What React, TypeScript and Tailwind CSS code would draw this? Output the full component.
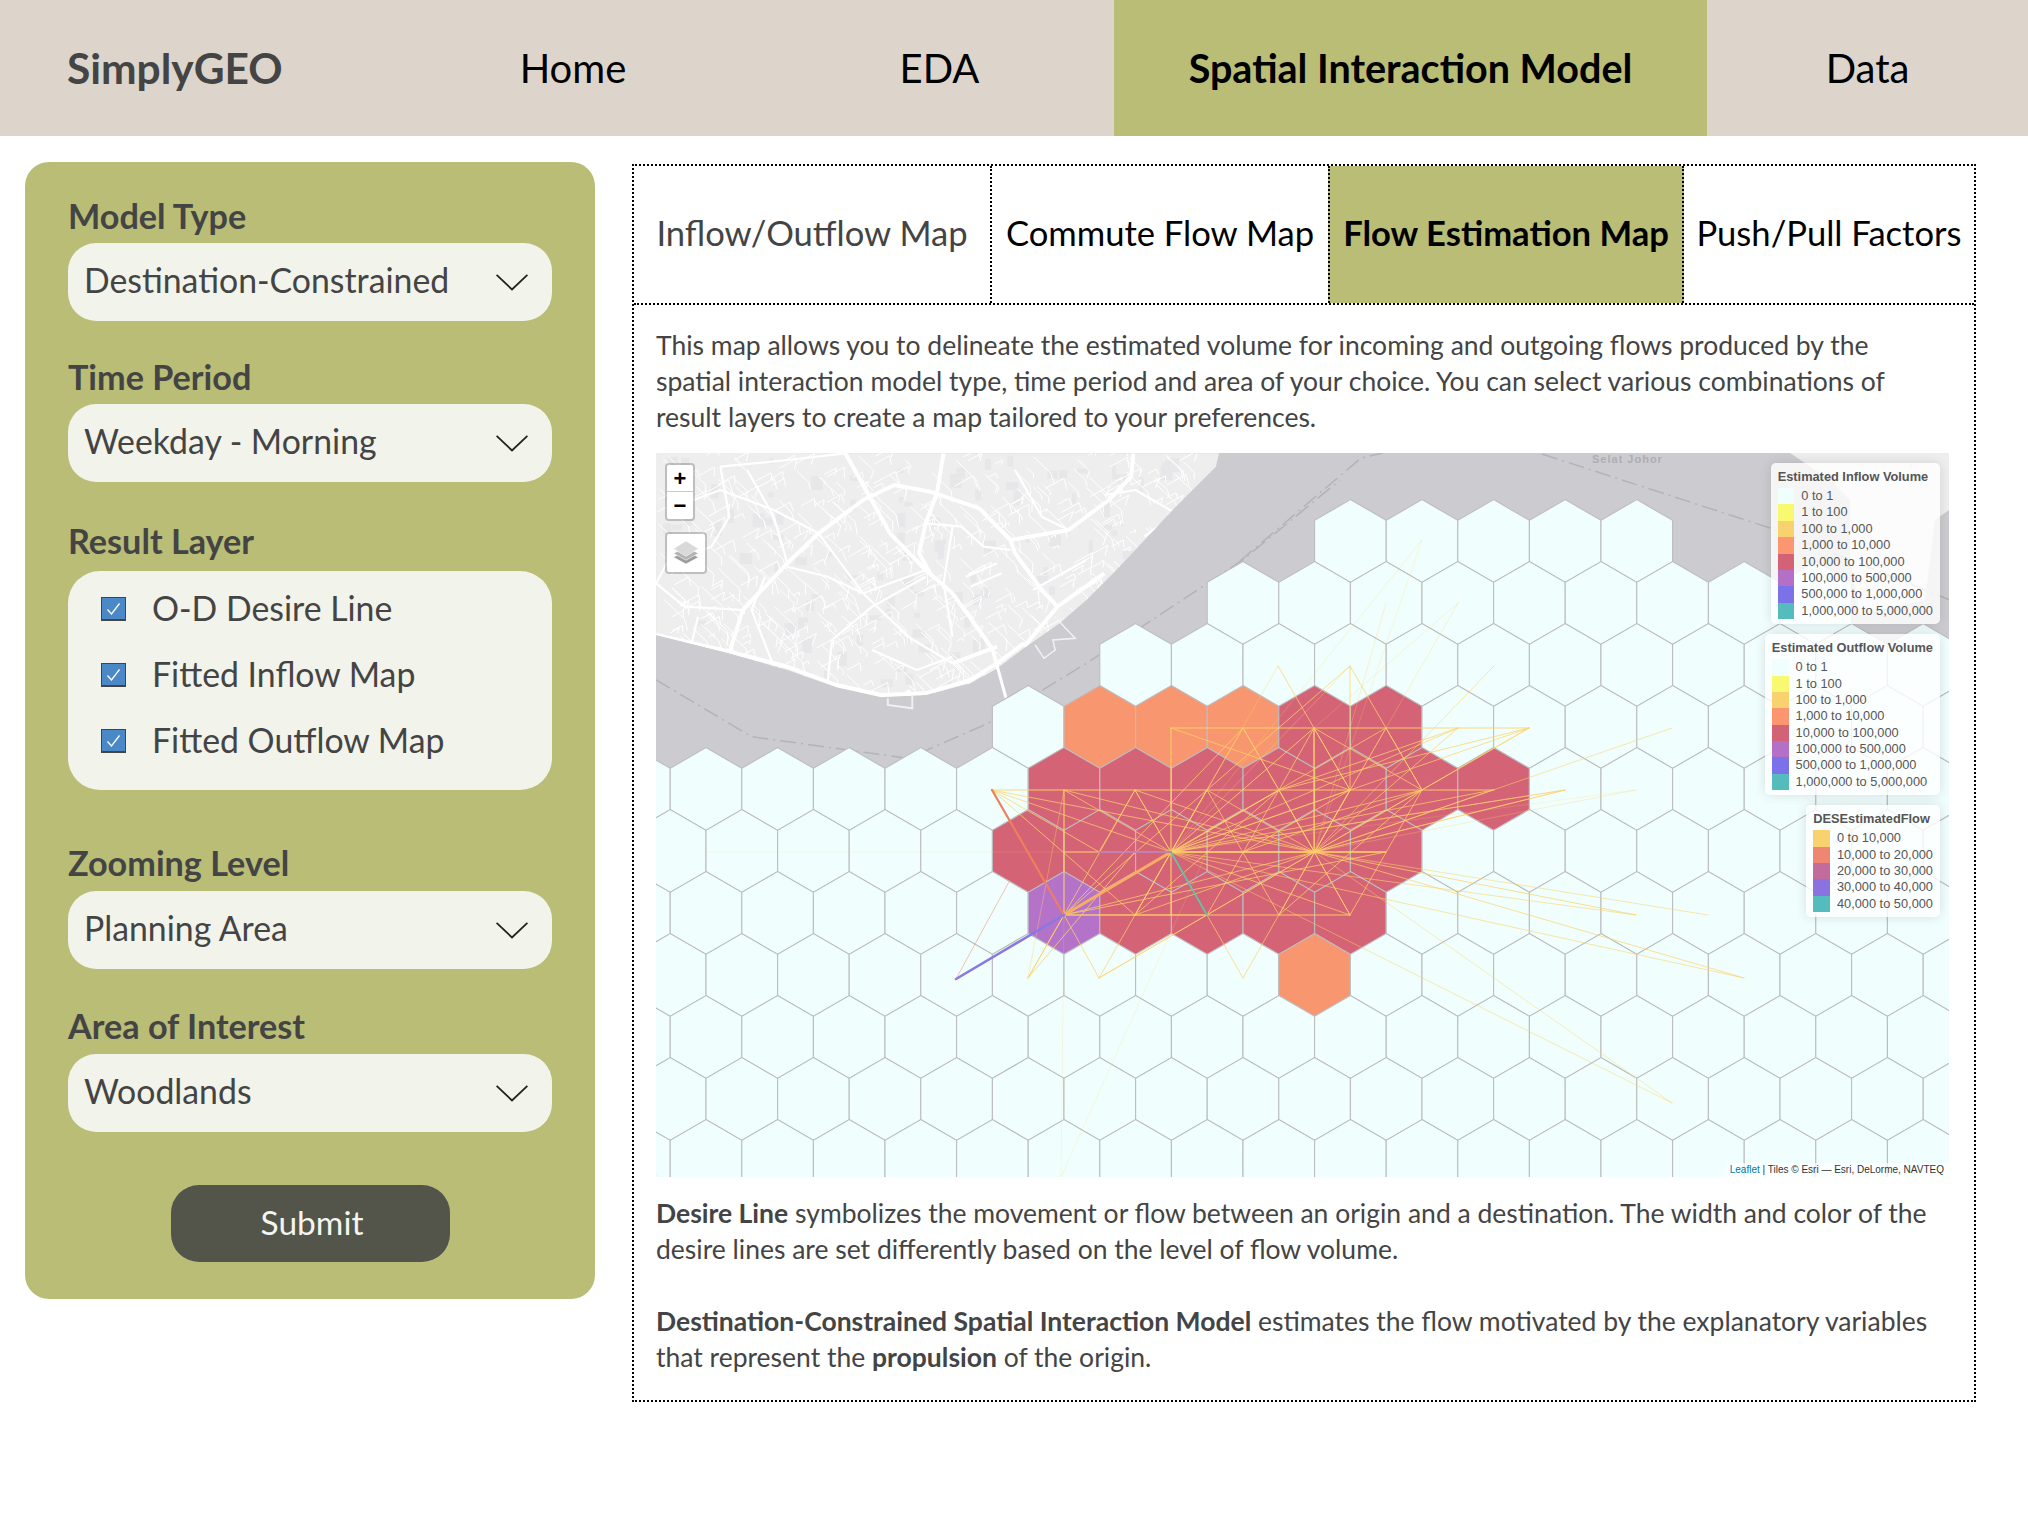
import React from "react";

type Pt = [number, number];

const olive = "bg-[#b9bd76]";

// map drawing uses page pixels, so the svg viewBox starts at the map's corner
const MAP = { x: 656, y: 453, w: 1293, h: 724 };

// the crop I read coastline and roads from was squashed horizontally
const z = (x: number, y: number): Pt => [640 + x / 2.24, 450 + y / 3];
const line = (pts: Pt[]) => pts.map((p) => `${p[0].toFixed(1)},${p[1].toFixed(1)}`).join(" ");
const zl = (vals: number[]) => {
    const out: Pt[] = [];
    for (let i = 0; i < vals.length; i += 2) out.push(z(vals[i], vals[i + 1]));
    return line(out);
};

const landPoints =
    "656,453 " +
    zl([36, 555, 200, 610, 330, 660, 440, 712, 540, 742, 640, 735, 740, 700, 800, 655, 860, 595, 940, 520, 1000, 450, 1060, 370, 1130, 270, 1200, 170, 1290, 50, 1297, 10]);

const majorRoads = [
    [36, 555, 200, 605, 330, 650, 440, 705, 540, 735, 640, 730, 740, 690, 800, 640, 860, 580],
    [460, 10, 510, 130, 560, 250, 640, 360, 700, 430, 770, 560, 790, 600, 820, 745],
    [680, 10, 665, 130, 640, 220, 625, 310, 650, 370],
    [200, 610, 230, 480, 330, 340, 400, 250, 500, 150, 570, 105, 650, 125, 760, 175, 830, 270, 840, 310, 900, 420, 935, 470],
    [1105, 10, 1100, 80, 1050, 150, 960, 240, 830, 270],
    [860, 590, 935, 470, 1040, 370],
    [700, 640, 800, 590],
    [600, 720, 610, 775],
];

const minorRoads = [
    [400, 250, 500, 430, 600, 560, 700, 640],
    [330, 350, 420, 380, 500, 430, 640, 360],
    [36, 400, 100, 470, 230, 480],
    [180, 50, 330, 30, 460, 10],
    [180, 50, 200, 200, 160, 290, 60, 340, 36, 400],
    [420, 700, 430, 570, 520, 470, 640, 380],
    [1040, 135, 1110, 120, 1200, 190, 1130, 260],
    [640, 220, 720, 230, 770, 290, 830, 300],
    [730, 380, 800, 340],
    [740, 410, 810, 370],
    [130, 500, 105, 640],
    [300, 650, 250, 480, 280, 380],
    [60, 180, 180, 120, 300, 180, 400, 250],
    [240, 60, 300, 200, 330, 340],
    [840, 60, 900, 200, 960, 240],
    [700, 230, 680, 400, 700, 560],
    [520, 600, 620, 660, 700, 620],
    [880, 420, 1000, 330],
];

// small streets: cheap repeatable noise, clipped to the land shape
function makeStreets() {
    const out: string[] = [];
    let seed = 17;
    const rnd = () => {
        seed = (seed * 16807) % 2147483647;
        return seed / 2147483647;
    };
    for (let i = 0; i < 620; i++) {
        const x = 40 + rnd() * 1180;
        const y = 15 + rnd() * 720;
        const a = rnd() < 0.5 ? 0.95 : -0.55;
        const len = 10 + rnd() * 34;
        const p1 = z(x, y);
        const p2: Pt = [p1[0] + len * 0.5, p1[1] + len * 0.5 * a];
        const p3: Pt = [p2[0] + len * 0.25 * (rnd() - 0.5), p2[1] + len * 0.3];
        out.push(line([p1, p2, p3]));
    }
    return out;
}
const streets = makeStreets();

function makeBlocks() {
    const out: Pt[] = [];
    let seed = 91;
    const rnd = () => {
        seed = (seed * 16807) % 2147483647;
        return seed / 2147483647;
    };
    for (let i = 0; i < 130; i++) out.push(z(40 + rnd() * 1150, 15 + rnd() * 710));
    return out;
}
const blocks = makeBlocks();

const HEX_R = 41.4;
const HEX_W = 71.6;

const center = (r: number, k: number): Pt => [(r % 2 === 0 ? 1350.4 : 1314.6) + HEX_W * k, 541 + 62 * r];

const hexPoints = ([cx, cy]: Pt) =>
    line([
        [cx, cy - HEX_R],
        [cx + HEX_W / 2, cy - 20.7],
        [cx + HEX_W / 2, cy + 20.7],
        [cx, cy + HEX_R],
        [cx - HEX_W / 2, cy + 20.7],
        [cx - HEX_W / 2, cy - 20.7],
    ]);

const PALE = "#f0fffd";
const RED = "#d46376";
const ORANGE = "#f8976f";
const PURPLE = "#b473c9";

// row -> first and last column
const rows: [number, number, number][] = [
    [0, 0, 4],
    [1, -1, 7],
    [2, -3, 8],
    [3, -4, 9],
    [4, -10, 8],
    [5, -9, 9],
    [6, -10, 8],
    [7, -9, 9],
    [8, -10, 8],
    [9, -9, 9],
    [10, -10, 8],
];

function hexColor(r: number, k: number) {
    if (r === 3 && k >= -3 && k <= -1) return ORANGE;
    if (r === 3 && k >= 0 && k <= 1) return RED;
    if (r === 4 && k >= -4 && k <= 2) return RED;
    if (r === 5 && k >= -4 && k <= 1) return RED;
    if (r === 6 && k === -4) return PURPLE;
    if (r === 6 && k >= -3 && k <= 0) return RED;
    if (r === 7 && k === 0) return ORANGE;
    return PALE;
}

const hexes: { pts: string; fill: string }[] = [];
rows.forEach(([r, a, b]) => {
    for (let k = a; k <= b; k++) hexes.push({ pts: hexPoints(center(r, k)), fill: hexColor(r, k) });
});

const H1: Pt = [1171, 852];
const H2: Pt = [1314.5, 852];

const nodes: Pt[] = [
    [992, 790], [1064, 790], [1135, 790], [1207, 790], [1279, 790], [1350, 790], [1422, 790], [1493, 790], [1565, 790],
    [1243, 728], [1314, 728], [1386, 728], [1458, 728], [1529, 728],
    [1099, 852], [1243, 852], [1386, 852],
    [1064, 915], [1135, 915], [1207, 915], [1350, 915],
    [1099, 978], [1243, 978],
];

const secondary: [Pt, Pt[]][] = [
    [[1279, 790], [[1243, 728], [1314, 728], [1207, 915], [1350, 915], [1135, 915], [1458, 728], [1529, 728], [1064, 915]]],
    [[1422, 790], [[1314, 728], [1386, 728], [1529, 728], [1279, 915], [1350, 915], [1350, 666], [1243, 852]]],
    [[1064, 915], [[1135, 790], [1207, 790], [1243, 728], [1207, 915], [1028, 978], [1099, 978], [1386, 852]]],
    [[1350, 790], [[1314, 728], [1350, 666], [1278, 666], [1243, 852], [1279, 915], [1171, 728]]],
    [[1207, 790], [[1135, 915], [1279, 915], [1350, 666]]],
    [[1135, 790], [[1099, 852], [1207, 915]]],
    [[992, 790], [[1135, 915], [1064, 915], [1099, 852]]],
];

const straight: [Pt, Pt][] = [
    [[1171, 728], [1529, 728]],
    [[992, 790], [1494, 790]],
    [[1064, 852], [1386, 852]],
    [[1064, 915], [1350, 915]],
    [[1171, 728], [1171, 915]],
    [[1064, 790], [1064, 915]],
    [[1314, 728], [1314, 852]],
];

const faint: [Pt, Pt, number][] = [
    [H2, [1636, 915], 0.75],
    [H1, [1636, 915], 0.6],
    [H2, [1708, 915], 0.55],
    [H2, [1744, 978], 0.7],
    [H1, [1744, 978], 0.6],
    [H1, [1672, 1103], 0.5],
    [H2, [1672, 1103], 0.45],
    [H2, [1494, 666], 0.55],
    [H2, [1565, 790], 0.55],
    [H2, [1636, 790], 0.3],
    [H2, [1672, 728], 0.55],
    [H2, [1458, 603], 0.3],
    [H2, [1386, 603], 0.3],
    [H2, [1422, 540], 0.22],
    [H1, [1458, 603], 0.25],
    [H1, [1422, 540], 0.25],
    [H1, [1565, 790], 0.4],
    [H1, [1636, 790], 0.2],
    [H1, [1278, 666], 0.35],
    [H1, [1350, 666], 0.35],
    [H1, [706, 852], 0.18],
    [[1064, 915], [1061, 1177], 0.2],
    [[1207, 852], [1061, 1177], 0.2],
    [[1064, 915], [1028, 978], 0.9],
    [[1135, 852], [1028, 978], 0.8],
    [[1207, 915], [1099, 978], 0.7],
    [[1064, 790], [1028, 978], 0.4],
];

function FlowLines() {
    const stroke = "#fdd269";
    return (
        <g fill="none" strokeLinecap="round">
            {faint.map(([a, b, o], i) => (
                <line key={i} x1={a[0]} y1={a[1]} x2={b[0]} y2={b[1]} stroke={stroke} strokeOpacity={o} strokeWidth={1} />
            ))}
            {[H1, H2].map((hub, h) =>
                nodes.map((n, i) => (
                    <line key={`${h}-${i}`} x1={hub[0]} y1={hub[1]} x2={n[0]} y2={n[1]} stroke={stroke} strokeOpacity={0.7} strokeWidth={1} />
                ))
            )}
            {secondary.map(([hub, ends], h) =>
                ends.map((n, i) => (
                    <line key={`s${h}-${i}`} x1={hub[0]} y1={hub[1]} x2={n[0]} y2={n[1]} stroke={stroke} strokeOpacity={0.75} strokeWidth={1} />
                ))
            )}
            {straight.map(([a, b], i) => (
                <line key={`h${i}`} x1={a[0]} y1={a[1]} x2={b[0]} y2={b[1]} stroke={stroke} strokeWidth={1.2} strokeOpacity={0.9} />
            ))}
            <line x1={1064} y1={915} x2={1171} y2={852} stroke="#f8ad62" strokeWidth={3} />
            <line x1={992} y1={790} x2={1064} y2={915} stroke="#ee7f5c" strokeWidth={2.2} />
            <line x1={1064} y1={915} x2={956} y2={979} stroke="#8a78e2" strokeWidth={2.6} />
            <line x1={1099} y1={852} x2={1171} y2={852} stroke="#b06fc9" strokeWidth={1.6} />
            <line x1={1171} y1={852} x2={1207} y2={915} stroke="#5cc2ac" strokeWidth={1.6} />
            <line x1={956} y1={979} x2={1010} y2={880} stroke="#f0907a" strokeWidth={0.8} strokeOpacity={0.7} />
        </g>
    );
}

function BaseMap() {
    const borders = [
        zl([36, 690, 250, 860, 600, 925, 780, 820, 1000, 640, 1350, 330, 1568, 90]),
        line([[1240, 561], [1361, 458], [1383, 453]]),
        line([[1542, 454], [1770, 528], [1950, 600]]),
    ];
    return (
        <>
            <clipPath id="land">
                <polygon points={landPoints} />
            </clipPath>
            <rect x={MAP.x} y={MAP.y} width={MAP.w} height={MAP.h} fill="#cccbcf" />
            <polygon points={landPoints} fill="#eeeeef" />
            <polygon points="1790,453 1949,453 1949,510 1935,520 1925,600 1860,615 1850,560 1850,500 1830,480" fill="#eeeeef" />
            {borders.map((b, i) => (
                <polyline key={i} points={b} fill="none" stroke="#b4b4b7" strokeWidth={1.5} strokeDasharray="16 5 2 5" />
            ))}
            <g clipPath="url(#land)" fill="none" stroke="#ffffff" strokeLinejoin="round">
                {blocks.map((b, i) => (
                    <rect key={i} x={b[0]} y={b[1]} width={4 + (i % 5) * 2} height={5 + (i % 4) * 3} fill="#e7e7e9" stroke="none" />
                ))}
                {streets.map((s, i) => (
                    <polyline key={i} points={s} strokeWidth={1} />
                ))}
                {minorRoads.map((r, i) => (
                    <polyline key={i} points={zl(r)} strokeWidth={2.2} />
                ))}
                {majorRoads.map((r, i) => (
                    <polyline key={i} points={zl(r)} strokeWidth={4} />
                ))}
            </g>
            <polyline points={zl([790, 600, 820, 745])} fill="none" stroke="#ffffff" strokeWidth={3} />
            <polyline points={zl([610, 735, 610, 775, 555, 765, 555, 745])} fill="none" stroke="#f0f0f1" strokeWidth={2} />
            <polyline points={zl([885, 585, 905, 625, 930, 600, 925, 570, 975, 565, 950, 530, 930, 500])} fill="none" stroke="#f2f2f3" strokeWidth={1.5} />
            <text x={1592} y={463} fontFamily="'Liberation Sans', sans-serif" fontSize={11} fontWeight={700} letterSpacing={1} fill="#aeaeb2">
                Selat Johor
            </text>
        </>
    );
}

const inflowColors = ["#f0fffd", "#f9f871", "#f8d26f", "#fb9670", "#d46276", "#b470c6", "#7b72ea", "#55bcbd"];
const volumeLabels = ["0 to 1", "1 to 100", "100 to 1,000", "1,000 to 10,000", "10,000 to 100,000", "100,000 to 500,000", "500,000 to 1,000,000", "1,000,000 to 5,000,000"];
const flowColors = ["#f8d26e", "#ee8672", "#c36b9c", "#8a72e0", "#55bcbd"];
const flowLabels = ["0 to 10,000", "10,000 to 20,000", "20,000 to 30,000", "30,000 to 40,000", "40,000 to 50,000"];

function Legend({ title, colors, labels }: { title: string; colors: string[]; labels: string[] }) {
    return (
        <div className="bg-white/80 rounded-[5px] pl-[7px] pr-[7px] pt-[5px] pb-[5px] shadow-[0_0_12px_rgba(0,0,0,0.12)] text-[#555] text-[12.8px] leading-[16.4px]">
            <div className="font-bold h-[20px] leading-[17px]">{title}</div>
            {labels.map((label, i) => (
                <div key={label} className="flex h-[16.4px] items-center gap-[7px]">
                    <span className="w-[16.7px] h-[16.4px]" style={{ background: colors[i] }} />
                    <span className="whitespace-nowrap">{label}</span>
                </div>
            ))}
        </div>
    );
}

function LayersIcon() {
    return (
        <svg width="26" height="26" viewBox="0 0 26 26">
            <path d="M13 11 L26 18 L13 25 L0 18 Z" transform="translate(0.5 0) scale(0.96)" fill="#9b9b9b" stroke="#fff" strokeWidth={0.6} />
            <path d="M13 7 L26 14 L13 21 L0 14 Z" transform="translate(0.5 0) scale(0.96)" fill="#b4b4b4" stroke="#fff" strokeWidth={0.6} />
            <path d="M13 1 L26 9 L13 17 L0 9 Z" transform="translate(0.5 0) scale(0.96)" fill="#d9d9d9" stroke="#fff" strokeWidth={0.6} />
        </svg>
    );
}

function FlowMap() {
    return (
        <div className="relative w-[1293px] h-[724px] overflow-hidden rounded-[3px] font-['Liberation_Sans',sans-serif]">
            <svg className="block" width={MAP.w} height={MAP.h} viewBox={`${MAP.x} ${MAP.y} ${MAP.w} ${MAP.h}`}>
                <BaseMap />
                <g stroke="#bdbdc0" strokeWidth={1.1}>
                    {hexes.map((h, i) => (
                        <polygon key={i} points={h.pts} fill={h.fill} />
                    ))}
                </g>
                <FlowLines />
            </svg>

            <div className="absolute left-[9px] top-[10px] w-[30px] bg-white rounded-[4px] border-2 border-black/20 bg-clip-padding text-black font-bold text-[22px] leading-[27px] text-center">
                <div className="h-[27px] border-b border-[#ccc]">+</div>
                <div className="h-[27px]">−</div>
            </div>
            <div className="absolute left-[9px] top-[79px] w-[42px] h-[42px] bg-white rounded-[4px] border-2 border-black/20 bg-clip-padding flex items-center justify-center">
                <LayersIcon />
            </div>

            <div className="absolute right-[9px] top-[10px] flex flex-col items-end gap-[10px]">
                <Legend title="Estimated Inflow Volume" colors={inflowColors} labels={volumeLabels} />
                <Legend title="Estimated Outflow Volume" colors={inflowColors} labels={volumeLabels} />
                <Legend title="DESEstimatedFlow" colors={flowColors} labels={flowLabels} />
            </div>

            <div className="absolute right-0 bottom-0 h-[14px] px-[5px] bg-white/70 text-[10px] leading-[14px] text-[#333] whitespace-nowrap">
                <span className="text-[#0078a8]">Leaflet</span> | Tiles © Esri — Esri, DeLorme, NAVTEQ
            </div>
        </div>
    );
}

function Chevron() {
    return (
        <svg width="32" height="17" viewBox="0 0 32 17" fill="none" stroke="#222" strokeWidth={1.8}>
            <path d="M0.6 0.8 L16 15.5 L31.4 0.8" />
        </svg>
    );
}

function SelectBox({ value }: { value: string }) {
    return (
        <div className="h-[78px] rounded-[28px] bg-[#f2f3ea] flex items-center justify-between pl-[16px] pr-[24px] text-[33.8px] text-[#444]">
            <span className="pb-[3px]">{value}</span>
            <Chevron />
        </div>
    );
}

function Label({ children }: { children: React.ReactNode }) {
    return <div className="h-[40px] leading-[38px] text-[34.2px] font-bold text-[#444]">{children}</div>;
}

function CheckRow({ label }: { label: string }) {
    return (
        <div className="h-[66px] flex items-center gap-[26px]">
            <span className="w-[25px] h-[24px] bg-[#4a88c7] border border-[#444] border-b-2 flex items-center justify-center">
                <svg width="15" height="14" viewBox="0 0 15 14" fill="none" stroke="#fff" strokeWidth={1.3}>
                    <path d="M1.5 7.5 L5.5 12 L13.5 1.5" />
                </svg>
            </span>
            <span className="text-[33.8px] text-[#444] pb-[2px]">{label}</span>
        </div>
    );
}

function Sidebar() {
    return (
        <aside className={`w-[570px] shrink-0 rounded-[24px] ${olive} pt-[35px] pb-[37px] px-[43px]`}>
            <Label>Model Type</Label>
            <div className="mt-[6px]">
                <SelectBox value="Destination-Constrained" />
            </div>

            <div className="mt-[37px]">
                <Label>Time Period</Label>
            </div>
            <div className="mt-[6px]">
                <SelectBox value="Weekday - Morning" />
            </div>

            <div className="mt-[40px]">
                <Label>Result Layer</Label>
            </div>
            <div className="mt-[9px] h-[219px] rounded-[32px] bg-[#f2f3ea] pl-[33px] pt-[5px]">
                <CheckRow label="O-D Desire Line" />
                <CheckRow label="Fitted Inflow Map" />
                <CheckRow label="Fitted Outflow Map" />
            </div>

            <div className="mt-[54px]">
                <Label>Zooming Level</Label>
            </div>
            <div className="mt-[7px]">
                <SelectBox value="Planning Area" />
            </div>

            <div className="mt-[38px]">
                <Label>Area of Interest</Label>
            </div>
            <div className="mt-[7px]">
                <SelectBox value="Woodlands" />
            </div>

            <button className="block mt-[53px] mx-auto w-[279px] h-[77px] rounded-[28px] bg-[#53544a] text-[#f5f5f0] text-[33.5px] pl-[4px] pb-[2px]">
                Submit
            </button>
        </aside>
    );
}

function Tabs() {
    return (
        <div className="flex h-[139px] border-b-2 border-dotted border-black text-[34.6px]">
            <div className="w-[356px] flex items-center justify-center text-[#444] pb-[3px]">Inflow/Outflow Map</div>
            <div className="w-[338px] flex items-center justify-center border-l-2 border-dotted border-black text-black pb-[3px]">Commute Flow Map</div>
            <div className={`w-[356px] flex items-center justify-center border-x-2 border-dotted border-black font-bold text-black pb-[3px] ${olive}`}>Flow Estimation Map</div>
            <div className="flex-1 flex items-center justify-center text-black pb-[3px]">Push/Pull Factors</div>
        </div>
    );
}

function Header() {
    return (
        <header className="h-[136px] bg-[#ddd5cc] flex items-center text-[40px] text-black">
            <div className="w-[381px] pl-[67px] font-bold text-[#444] text-[42.5px]">SimplyGEO</div>
            <div className="w-[384px] text-center">Home</div>
            <div className="w-[349px] text-center">EDA</div>
            <div className={`w-[593px] h-full flex items-center justify-center font-bold text-[39.5px] ${olive}`}>Spatial Interaction Model</div>
            <div className="flex-1 text-center">Data</div>
        </header>
    );
}

export default function App() {
    return (
        <div className="w-[2028px] h-[1521px] bg-white font-['Lato',sans-serif]">
            <Header />
            <div className="flex items-start pl-[25px] pt-[26px]">
                <Sidebar />
                <main className="ml-[37px] mt-[2px] w-[1344px] h-[1238px] border-2 border-dotted border-black">
                    <Tabs />
                    <div className="px-[22px] pt-[22px] text-[26.5px] leading-[36px] text-[#444]">
                        <p>
                            This map allows you to delineate the estimated volume for incoming and outgoing flows produced by the
                            <br />
                            spatial interaction model type, time period and area of your choice. You can select various combinations of
                            <br />
                            result layers to create a map tailored to your preferences.
                        </p>
                        <div className="mt-[18px]">
                            <FlowMap />
                        </div>
                        <p className="mt-[18px]">
                            <b>Desire Line</b> symbolizes the movement or flow between an origin and a destination. The width and color of the
                            <br />
                            desire lines are set differently based on the level of flow volume.
                        </p>
                        <p className="mt-[36px]">
                            <b>Destination-Constrained Spatial Interaction Model</b> estimates the flow motivated by the explanatory variables
                            <br />
                            that represent the <b>propulsion</b> of the origin.
                        </p>
                    </div>
                </main>
            </div>
        </div>
    );
}
